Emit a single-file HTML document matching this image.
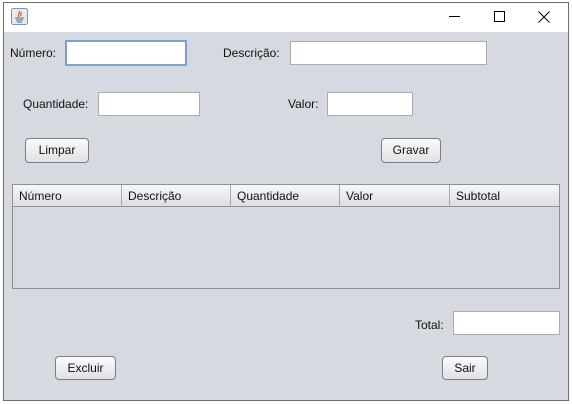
<!DOCTYPE html>
<html><head><meta charset="utf-8"><style>
*{box-sizing:border-box;margin:0;padding:0}
body{width:572px;height:404px;background:#fff;position:relative;overflow:hidden;font-family:"Liberation Sans",sans-serif;font-size:12px;color:#111}
.a{position:absolute}
#win{left:3px;top:2px;width:566px;height:399px;border:1px solid #6d6d6d;background:#d6d9e0}
#title{left:4px;top:3px;width:564px;height:29px;background:#fff}
.lbl{position:absolute;font-size:12px;line-height:14px}
.tf{position:absolute;background:#fff;border:1px solid #a9acb2}
.btn{position:absolute;border:1px solid #7a7d82;border-radius:4px;background:linear-gradient(#fbfbfc,#dfe1e5);text-align:center;font-size:12px}
.th{position:absolute;top:0;height:22px;line-height:22px;padding-left:6px;border-right:1px solid #a6a9ae}
</style></head><body>
<div class="a" id="win"></div>
<div class="a" id="title"></div>
<svg class="a" style="left:11px;top:8px" width="17" height="17" viewBox="0 0 17 17"><rect x="0.5" y="0.5" width="16" height="16" rx="2" fill="#e3ebf4" stroke="#7f94ad"/><path d="M8 3c2 2-2 3 0 6M10 4c1 1-1 2 0 4" stroke="#e06a10" fill="none" stroke-width="1.3"/><path d="M4 10h9M5 12h7M6 14h5" stroke="#4a6b8a" stroke-width="1"/></svg>
<div class="a" style="left:449px;top:16px;width:11px;height:1px;background:#000"></div>
<div class="a" style="left:494px;top:11px;width:11px;height:11px;border:1px solid #000"></div>
<svg class="a" style="left:538px;top:11px" width="12" height="12"><path d="M0.5 0.5L11.5 11.5M11.5 0.5L0.5 11.5" stroke="#000" stroke-width="1"/></svg>

<div class="lbl" style="left:10px;top:46px">Número:</div>
<div class="tf" style="left:65px;top:40px;width:122px;height:26px;border:2px solid #7ba2cf"></div>
<div class="lbl" style="left:223px;top:46px">Descrição:</div>
<div class="tf" style="left:290px;top:41px;width:197px;height:24px"></div>
<div class="lbl" style="left:23px;top:97px">Quantidade:</div>
<div class="tf" style="left:98px;top:92px;width:102px;height:24px"></div>
<div class="lbl" style="left:288px;top:97px">Valor:</div>
<div class="tf" style="left:327px;top:92px;width:86px;height:24px"></div>
<div class="btn" style="left:25px;top:138px;width:64px;height:25px;line-height:23px">Limpar</div>
<div class="btn" style="left:381px;top:138px;width:60px;height:25px;line-height:23px">Gravar</div>

<div class="a" style="left:12px;top:184px;width:548px;height:105px;border:1px solid #8e9196;background:#d6d9e0">
 <div class="a" style="left:0;top:0;width:546px;height:22px;background:linear-gradient(#f6f7f9,#dcdee3);border-bottom:1px solid #8e9196">
  <div class="th" style="left:0;width:109px">Número</div>
  <div class="th" style="left:109px;width:109px">Descrição</div>
  <div class="th" style="left:218px;width:109px">Quantidade</div>
  <div class="th" style="left:327px;width:110px">Valor</div>
  <div class="th" style="left:437px;width:109px;border-right:none">Subtotal</div>
 </div>
</div>

<div class="lbl" style="left:415px;top:318px">Total:</div>
<div class="tf" style="left:453px;top:311px;width:107px;height:24px"></div>
<div class="btn" style="left:55px;top:356px;width:61px;height:24px;line-height:22px">Excluir</div>
<div class="btn" style="left:442px;top:356px;width:46px;height:24px;line-height:22px">Sair</div>
</body></html>
